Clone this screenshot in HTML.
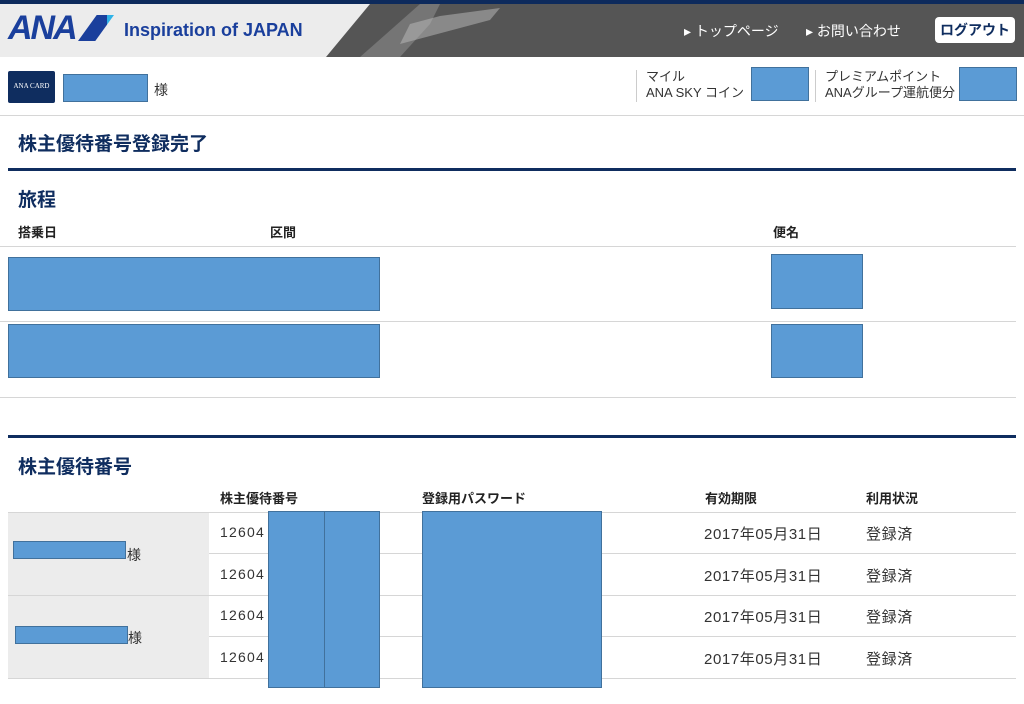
<!DOCTYPE html>
<html><head><meta charset="utf-8"><style>
*{margin:0;padding:0;box-sizing:border-box}
body{width:1024px;height:704px;position:relative;background:#fff;font-family:"Liberation Sans","Noto Sans CJK JP",sans-serif;color:#333;overflow:hidden}
.a{position:absolute}
.b{position:absolute;background:#5b9bd5;border:1px solid #41719c}
.h{position:absolute;height:1px;background:#d6d6d6}
.nv{position:absolute;height:3px;background:#0f2d5f;left:8px;width:1008px}
.t{position:absolute;font-weight:bold;color:#0f2d5f;font-size:19px}
.ch{position:absolute;font-weight:bold;font-size:13px;color:#222}
.c{position:absolute;font-size:14px;color:#333}
.d{position:absolute;font-size:15px;color:#333;letter-spacing:.6px}
</style></head><body>
<div class="a" style="left:0;top:0;width:1024px;height:4px;background:#0d2a5c"></div>
<div class="a" style="left:0;top:4px;width:1024px;height:53px;background:#ececec"></div>
<div class="a" style="left:326px;top:4px;width:698px;height:53px;background:#555;clip-path:polygon(44px 0,100% 0,100% 100%,0 100%)"></div>
<div class="a" style="left:360px;top:4px;width:80px;height:53px;background:#8a8a8a;opacity:.6;clip-path:polygon(40px 100%,70px 20px,80px 0,60px 0,0 100%)"></div>
<div class="a" style="left:400px;top:8px;width:100px;height:40px;background:#bdbdbd;opacity:.5;clip-path:polygon(10% 40%,40% 20%,70% 10%,100% 0,90% 30%,60% 50%,30% 70%,0 90%)"></div>
<div class="a" style="left:8px;top:11px;font-size:34px;font-weight:bold;font-style:italic;color:#1a3f9c;letter-spacing:-2px;line-height:34px">ANA</div>
<div class="a" style="left:78px;top:15px;width:36px;height:26px;background:linear-gradient(90deg,#1a3f9c 80%,#2fb3e8 80%);clip-path:polygon(52% 0,100% 0,48% 100%,0 100%)"></div>
<div class="a" style="left:124px;top:20px;font-size:18px;font-weight:bold;color:#1a3f9c">Inspiration of JAPAN</div>
<div class="a" style="left:684px;top:21px;font-size:14px;color:#fff">▸ トップページ</div>
<div class="a" style="left:806px;top:21px;font-size:14px;color:#fff">▸ お問い合わせ</div>
<div class="a" style="left:935px;top:17px;width:80px;height:26px;background:#fff;border-radius:4px;font-size:14px;color:#0f2d5f;font-weight:bold;text-align:center;line-height:26px">ログアウト</div>
<div class="a" style="left:8px;top:71px;width:47px;height:32px;background:#0f2d5f;border-radius:2px;color:#fff;font-size:7px;text-align:center;line-height:30px;font-family:'Liberation Serif',serif">ANA CARD</div>
<div class="b" style="left:63px;top:74px;width:85px;height:28px"></div>
<div class="c" style="left:154px;top:80px">様</div>
<div class="a" style="left:636px;top:70px;width:1px;height:32px;background:#ccc"></div>
<div class="c" style="left:646px;top:69px;font-size:13px;line-height:16px">マイル<br>ANA SKY コイン</div>
<div class="b" style="left:751px;top:67px;width:58px;height:34px"></div>
<div class="a" style="left:815px;top:70px;width:1px;height:32px;background:#ccc"></div>
<div class="c" style="left:825px;top:69px;font-size:13px;line-height:16px">プレミアムポイント<br>ANAグループ運航便分</div>
<div class="b" style="left:959px;top:67px;width:58px;height:34px"></div>
<div class="h" style="left:0;top:115px;width:1024px"></div>
<div class="t" style="left:18px;top:129px">株主優待番号登録完了</div>
<div class="nv" style="top:168px"></div>
<div class="t" style="left:18px;top:185px">旅程</div>
<div class="ch" style="left:18px;top:222px">搭乗日</div>
<div class="ch" style="left:270px;top:222px">区間</div>
<div class="ch" style="left:773px;top:222px">便名</div>
<div class="h" style="left:0;top:246px;width:1016px"></div>
<div class="b" style="left:8px;top:257px;width:372px;height:54px"></div>
<div class="b" style="left:771px;top:254px;width:92px;height:55px"></div>
<div class="h" style="left:0;top:321px;width:1016px"></div>
<div class="b" style="left:8px;top:324px;width:372px;height:54px"></div>
<div class="b" style="left:771px;top:324px;width:92px;height:54px"></div>
<div class="h" style="left:0;top:397px;width:1016px"></div>
<div class="nv" style="top:435px"></div>
<div class="t" style="left:18px;top:452px">株主優待番号</div>
<div class="ch" style="left:220px;top:488px">株主優待番号</div>
<div class="ch" style="left:422px;top:488px">登録用パスワード</div>
<div class="ch" style="left:705px;top:488px">有効期限</div>
<div class="ch" style="left:866px;top:488px">利用状況</div>
<div class="a" style="left:8px;top:512px;width:201px;height:166px;background:#ececec"></div>
<div class="h" style="left:8px;top:512px;width:1008px"></div>
<div class="h" style="left:209px;top:553px;width:807px"></div>
<div class="h" style="left:8px;top:595px;width:1008px"></div>
<div class="h" style="left:209px;top:636px;width:807px"></div>
<div class="h" style="left:8px;top:678px;width:1008px"></div>
<div class="b" style="left:13px;top:541px;width:113px;height:18px"></div>
<div class="c" style="left:127px;top:545px">様</div>
<div class="b" style="left:15px;top:626px;width:113px;height:18px"></div>
<div class="c" style="left:128px;top:628px">様</div>
<div class="c" style="left:220px;top:524px;letter-spacing:1.2px">12604</div>
<div class="c" style="left:220px;top:566px;letter-spacing:1.2px">12604</div>
<div class="c" style="left:220px;top:607px;letter-spacing:1.2px">12604</div>
<div class="c" style="left:220px;top:649px;letter-spacing:1.2px">12604</div>
<div class="d" style="left:704px;top:523px">2017年05月31日</div>
<div class="d" style="left:704px;top:565px">2017年05月31日</div>
<div class="d" style="left:704px;top:606px">2017年05月31日</div>
<div class="d" style="left:704px;top:648px">2017年05月31日</div>
<div class="d" style="left:866px;top:523px">登録済</div>
<div class="d" style="left:866px;top:565px">登録済</div>
<div class="d" style="left:866px;top:606px">登録済</div>
<div class="d" style="left:866px;top:648px">登録済</div>
<div class="b" style="left:268px;top:511px;width:57px;height:177px"></div>
<div class="b" style="left:324px;top:511px;width:56px;height:177px"></div>
<div class="b" style="left:422px;top:511px;width:180px;height:177px"></div>
</body></html>
